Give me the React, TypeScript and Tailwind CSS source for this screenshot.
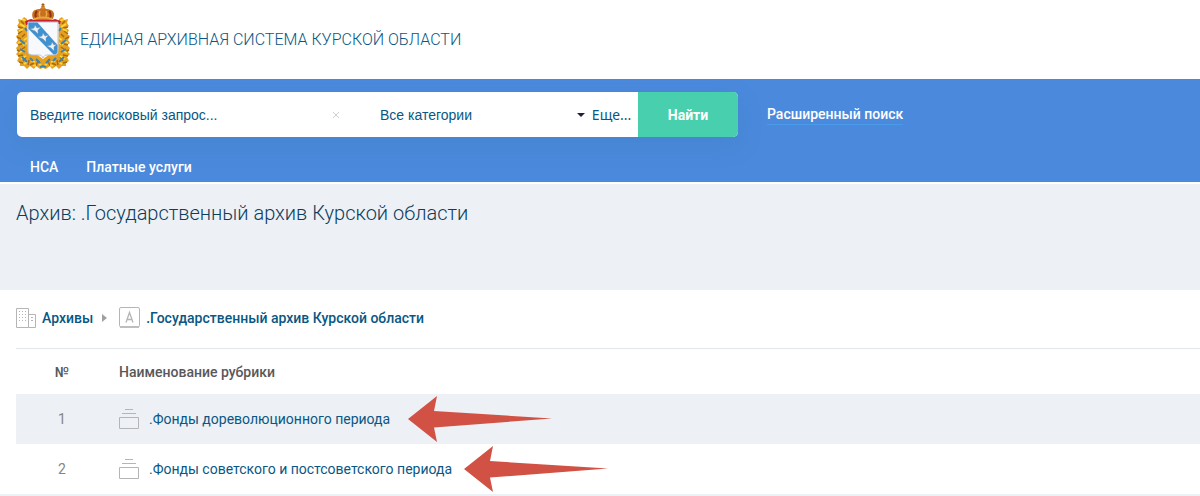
import type { ReactNode } from "react";

type Rubric = {
  id: number;
  title: string;
  arrowClassName: string;
};

const rubrics: Rubric[] = [
  { id: 1, title: ".Фонды дореволюционного периода", arrowClassName: "ml-[18px]" },
  { id: 2, title: ".Фонды советского и постсоветского периода", arrowClassName: "ml-3" },
];

function WreathHalf() {
  return (
    <>
      <path
        d="M11 16L8 14 6 17 2 16 3 20 1 23 4 25 1 27 3 31 0 33 2 37 0 40 3 42 0 45 2 49 0 51 3 54 1 58 4 60 4 63 8 63 11 66 14 63 18 66 20 63 24 66 27 65V56L20 51 12 50z"
        fill="#e6a01f"
      />
      <path
        d="M5 18l3 3M2 24l5 1M6 28l-4 3M9 31l-3 3M1 34l4 2M2 42l4-1M9 44l-4 3M1 47l4 2M7 52l-5 1M10 54l-3 4M3 59l4 1M13 57l-1 5M18 60l-4 2M22 58l-2 5"
        fill="none"
        stroke="#a9690f"
        strokeWidth="1.500"
      />
      <path
        d="M6 16l4 2M4 21l5 3M3 28l4-2M8 37l3-2M2 40l4-2M7 42l4-2M3 50l5-3M5 56l5-3M8 61l3-2M15 58l4 1M17 63l3-1M23 61l3 2"
        fill="none"
        stroke="#ffd638"
        strokeWidth="1.800"
      />
      <path
        d="M9 25l2 3M4 37l5 4M9 49l-5-3M6 54l5 5M14 55l3 3M20 56l4 4M24 64l3-1"
        fill="none"
        stroke="#3b83b5"
        strokeWidth="2"
      />
    </>
  );
}

function CoatOfArms() {
  return (
    <svg viewBox="0 0 54 67" className="h-[67px] w-[54px] flex-none" aria-hidden="true">
      <WreathHalf />
      <g transform="matrix(-1 0 0 1 54 0)">
        <WreathHalf />
      </g>
      {/* crown with its red ribbon */}
      <path d="M9 18l6-2 3 1h18l3-1 6 2-1 3-6-1H17l-7 2z" fill="#c9202f" />
      <path d="M18 17c-3-4-2-9 1-10 2-1 4-1 5-1 1-2 5-2 6 0 1 0 3 0 5 1 4 2 4 6 1 10z" fill="#c9701f" />
      <path d="M20 15c-1-3-1-5 1-7M34 15c1-3 1-5-1-7" fill="none" stroke="#8d3213" strokeWidth="2" />
      <path d="M24 8c-1 2-1 4 0 6M30 8c1 2 1 4 0 6" fill="none" stroke="#edaa4c" strokeWidth="1.500" />
      <path d="M18 16c6-2 12-2 18 0" fill="none" stroke="#e7aa3f" strokeWidth="2" />
      <circle cx="27" cy="4" r="2" fill="#d68a35" />
      <path d="M27 0v4M25.500 1.500h3" stroke="#a85b15" strokeWidth="1" />
      {/* shield with three partridges */}
      <path
        d="M12 19h30v29c0 3-2 4-5 4h-6c-2 0-3 1-4 3-1-2-2-3-4-3h-6c-3 0-5-1-5-4z"
        fill="#f7f9fd"
        stroke="#b6c2d4"
        strokeWidth="1"
      />
      <path d="M12.500 19.500h9L41.500 42v6c0 2-1 3.500-4 3.500L12.500 26z" fill="#3f92d2" />
      <g fill="#e9f1f8" stroke="#6f8ea8" strokeWidth=".5">
        <path d="M14 26l4-1 1-3 2 3 4-1-3 3v4l-3-3z" />
        <path d="M22 34l4-1 1-3 2 3 4-1-3 3v4l-3-3z" />
        <path d="M31 43l4-1 1-3 2 3 3-1-3 3v4l-3-3z" />
      </g>
    </svg>
  );
}

function BuildingsIcon() {
  return (
    <svg viewBox="0 0 20 20" className="h-5 w-5 flex-none" fill="none" stroke="#b5b5b5" aria-hidden="true">
      <path d="M.5.5h12v19H.5zM12.500 6.500h7v13h-7" />
      <path d="M3 3.500h7M3 6.500h7M3 9.500h7M3 12.500h7" strokeDasharray="1 2" />
      <path d="M15 9.500h2M15 12.500h2" />
    </svg>
  );
}

function ArchiveIcon() {
  return (
    <svg viewBox="0 0 21 21" className="h-[21px] w-[21px] flex-none" fill="none" stroke="#b5b5b5" aria-hidden="true">
      <rect x=".5" y=".5" width="20" height="19.500" rx="1.500" />
      <path d="M1 20h19" strokeWidth="1.500" />
      <path d="M7 15.500L10.500 5.500 14 15.500M8 12.500h5" strokeWidth="1.300" />
    </svg>
  );
}

function FundIcon() {
  return (
    <svg viewBox="0 0 20 20" className="h-5 w-5 flex-none" fill="none" stroke="#b5b5b5" aria-hidden="true">
      <path d="M6 .5h8M3 4.500h14M.5 8.500h19v11H.5z" />
    </svg>
  );
}

function PointerArrow({ className }: { className: string }) {
  return (
    <svg viewBox="0 0 144 46" className={`h-[46px] w-36 flex-none ${className}`} aria-hidden="true">
      <path d="M0 23L29 0l-3 15 118 7.500L26 31.500 29 46z" fill="#d15144" />
    </svg>
  );
}

function Crumb({ icon, children }: { icon: ReactNode; children: ReactNode }) {
  return (
    <a href="#" className="flex items-center gap-[6px] text-sm font-medium text-[#085784]">
      {icon}
      {children}
    </a>
  );
}

function SearchBar() {
  return (
    <form
      className="flex h-[45px] w-[721px] max-w-full overflow-hidden rounded-[5px] bg-white shadow-[0_8px_24px_rgba(60,120,160,0.2)]"
      onSubmit={(event) => event.preventDefault()}
    >
      <input
        type="text"
        aria-label="Поисковый запрос"
        placeholder="Введите поисковый запрос..."
        className="min-w-0 flex-1 pl-[13px] font-['Liberation_Sans',sans-serif] text-sm text-[#085784] outline-none placeholder:text-[#085784] placeholder:opacity-100"
      />
      <button type="reset" aria-label="Очистить" className="flex w-8 items-center justify-center">
        <svg viewBox="0 0 8 8" className="h-2 w-2" stroke="#cfcfcf" aria-hidden="true">
          <path d="M1 1l6 6M7 1L1 7" />
        </svg>
      </button>
      <div className="flex w-[233px] items-center pl-7">
        <select
          aria-label="Категория"
          className="h-full min-w-0 flex-1 appearance-none font-['Liberation_Sans',sans-serif] text-sm text-[#085784] outline-none"
        >
          <option>Все категории</option>
        </select>
        <svg viewBox="0 0 8 4" className="pointer-events-none h-1 w-2" fill="#202038" aria-hidden="true">
          <path d="M0 0h8L4 4z" />
        </svg>
      </div>
      <button type="button" className="w-[53px] font-['Noto_Sans',sans-serif] text-sm text-[#085784]">
        Еще...
      </button>
      <button type="submit" className="w-[100px] bg-[#48cfae] text-sm font-bold text-white">
        Найти
      </button>
    </form>
  );
}

export default function App() {
  return (
    <div className="bg-white font-[Roboto,sans-serif] text-[#085784]">
      <header className="flex h-[79px] items-start gap-[10px] px-4 pt-[3px]">
        <CoatOfArms />
        <a href="#" className="pt-[25px] text-base font-light">
          ЕДИНАЯ АРХИВНАЯ СИСТЕМА КУРСКОЙ ОБЛАСТИ
        </a>
      </header>

      <div className="h-[103px] bg-[#4a89dc] pt-[13px] pl-[17px] text-sm text-white">
        <div className="flex items-center gap-[29px]">
          <SearchBar />
          <a href="#" className="border-b border-[#4a9aea] font-medium">
            Расширенный поиск
          </a>
        </div>
        <nav className="mt-5 flex gap-7 pl-[13px] font-medium">
          <a href="#">НСА</a>
          <a href="#">Платные услуги</a>
        </nav>
      </div>

      <div className="mt-[2px] h-[106px] bg-[#edf0f5] px-4 pt-[15px]">
        <h1 className="text-xl font-light text-[#0b3d5c]">Архив: .Государственный архив Курской области</h1>
      </div>

      <main className="pl-4">
        <nav aria-label="Навигация" className="flex h-[59px] items-center border-b border-[#e3e6ed] pb-[3px]">
          <Crumb icon={<BuildingsIcon />}>Архивы</Crumb>
          <svg viewBox="0 0 5 8" className="mr-3 ml-[9px] h-2 w-[5px]" fill="#a0a0a0" aria-hidden="true">
            <path d="M0 0l5 4-5 4z" />
          </svg>
          <Crumb icon={<ArchiveIcon />}>.Государственный архив Курской области</Crumb>
        </nav>

        <table className="w-full table-fixed border-collapse text-sm">
          <thead>
            <tr className="h-[45px] text-[#58585a]">
              <th className="w-[92px] font-medium">№</th>
              <th className="pl-[11px] text-left font-medium">Наименование рубрики</th>
            </tr>
          </thead>
          <tbody>
            {rubrics.map((rubric) => (
              <tr key={rubric.id} className="h-[50px] odd:bg-[#edf0f5]">
                <td className="p-0 text-center text-[#858585]">{rubric.id}</td>
                <td className="p-0 pl-[11px]">
                  <div className="flex items-center">
                    <a href="#" className="flex items-center gap-[10px]">
                      <FundIcon />
                      {rubric.title}
                    </a>
                    <PointerArrow className={rubric.arrowClassName} />
                  </div>
                </td>
              </tr>
            ))}
          </tbody>
        </table>
      </main>
      <footer className="h-[2px] bg-[#edf0f5]" />
    </div>
  );
}
